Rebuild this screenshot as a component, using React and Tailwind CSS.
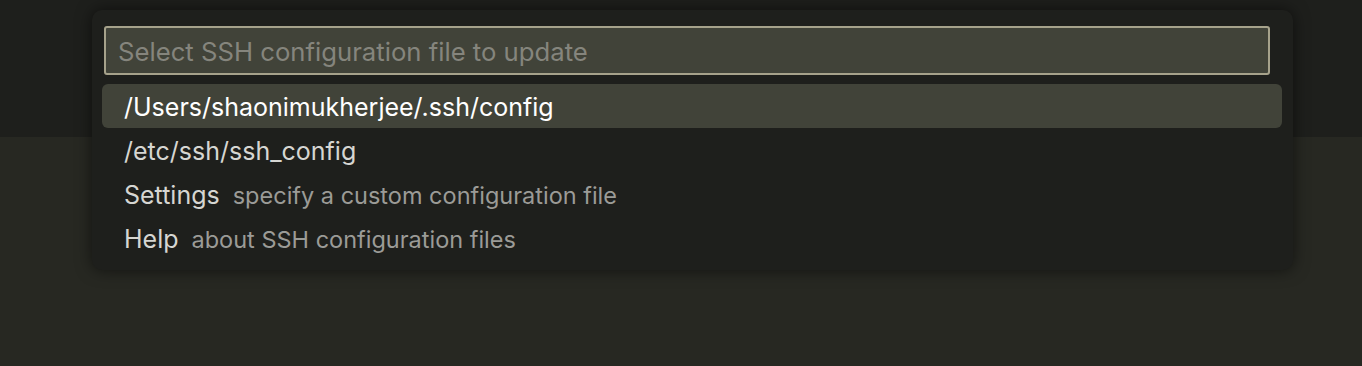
import React from 'react';

const items = [
  { label: '/Users/shaonimukherjee/.ssh/config', selected: true },
  { label: '/etc/ssh/ssh_config' },
  { label: 'Settings', detail: 'specify a custom configuration file' },
  { label: 'Help', detail: 'about SSH configuration files' },
];

export default function App() {
  return (
    <div className="relative h-[366px] w-[1362px] overflow-hidden bg-[#272822] font-['Inter','Liberation_Sans',sans-serif]">
      <div className="h-[137px] bg-[#1e1f1c]" />

      {/* Quick pick */}
      <div className="absolute left-[92px] top-[10px] w-[1201px] rounded-[10px] bg-[#1e1f1c] pt-[16px] pb-[10px] pl-[10px] pr-[11px] shadow-[0_0_16px_rgba(0,0,0,0.55)]">
        <div className="ml-[2px] mr-[12px] flex h-[49px] items-center rounded-[3px] border-2 border-[#a6a28b] bg-[#414339] px-[12px] pt-[2px]">
          <span className="text-[25.7px] leading-none text-[#85857d]">Select SSH configuration file to update</span>
        </div>
        <div className="mt-[9px] flex flex-col">
          {items.map((it) => (
            <div
              key={it.label}
              className={`flex h-[44px] items-center rounded-[6px] px-[22px] pt-[3px] ${it.selected ? 'bg-[#414339]' : ''}`}
            >
              <div className="flex items-baseline">
                <span className={`text-[25px] leading-none ${it.selected ? 'text-white' : 'text-[#d6d6d2]'}`}>{it.label}</span>
                {it.detail && (
                  <span className="ml-[13px] text-[23.5px] leading-none text-[#9b9b97]">{it.detail}</span>
                )}
              </div>
            </div>
          ))}
        </div>
      </div>
    </div>
  );
}
